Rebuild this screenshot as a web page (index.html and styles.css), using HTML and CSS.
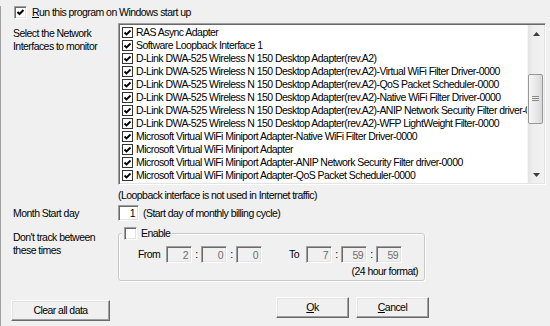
FILE: index.html
```html
<!DOCTYPE html>
<html lang="en">
<head>
    <meta charset="UTF-8">
    <title>Settings</title>
    <link rel="stylesheet" href="styles.css">
</head>
<body>
    <div class="dialog">
        <div class="run-row">
            <span class="chk3d">
                <svg width="9" height="9" viewBox="0 0 9 9"><polyline points="1.5,4 3.5,6 7.5,2" fill="none" stroke="#000" stroke-width="2"/></svg>
            </span>
            <span><u>R</u>un this program on Windows start up</span>
        </div>

        <div class="row">
            <div class="side-label">Select the Network<br>Interfaces to monitor</div>
            <div class="listbox">
                <ul class="items">
                    <li><span class="chk"></span>RAS Async Adapter</li>
                    <li><span class="chk"></span>Software Loopback Interface 1</li>
                    <li><span class="chk"></span>D-Link DWA-525 Wireless N 150 Desktop Adapter(rev.A2)</li>
                    <li><span class="chk"></span>D-Link DWA-525 Wireless N 150 Desktop Adapter(rev.A2)-Virtual WiFi Filter Driver-0000</li>
                    <li><span class="chk"></span>D-Link DWA-525 Wireless N 150 Desktop Adapter(rev.A2)-QoS Packet Scheduler-0000</li>
                    <li><span class="chk"></span>D-Link DWA-525 Wireless N 150 Desktop Adapter(rev.A2)-Native WiFi Filter Driver-0000</li>
                    <li><span class="chk"></span>D-Link DWA-525 Wireless N 150 Desktop Adapter(rev.A2)-ANIP Network Security Filter driver-0000</li>
                    <li><span class="chk"></span>D-Link DWA-525 Wireless N 150 Desktop Adapter(rev.A2)-WFP LightWeight Filter-0000</li>
                    <li><span class="chk"></span>Microsoft Virtual WiFi Miniport Adapter-Native WiFi Filter Driver-0000</li>
                    <li><span class="chk"></span>Microsoft Virtual WiFi Miniport Adapter</li>
                    <li><span class="chk"></span>Microsoft Virtual WiFi Miniport Adapter-ANIP Network Security Filter driver-0000</li>
                    <li><span class="chk"></span>Microsoft Virtual WiFi Miniport Adapter-QoS Packet Scheduler-0000</li>
                </ul>
                <div class="vscroll">
                    <div class="arrow">
                        <svg width="7" height="4" viewBox="0 0 7 4"><polygon points="0,4 3.5,0 7,4" fill="#3c3c3c"/></svg>
                    </div>
                    <div class="track">
                        <div class="thumb">
                            <svg width="7" height="6" viewBox="0 0 7 6"><path d="M0 0.5h7M0 2.5h7M0 4.5h7" stroke="#8a8a8a" stroke-width="1"/></svg>
                        </div>
                    </div>
                    <div class="arrow">
                        <svg width="7" height="4" viewBox="0 0 7 4"><polygon points="0,0 7,0 3.5,4" fill="#3c3c3c"/></svg>
                    </div>
                </div>
            </div>
        </div>

        <div class="note">(Loopback interface is not used in Internet traffic)</div>

        <div class="row month-row">
            <div class="side-label">Month Start day</div>
            <div class="edit day">1</div>
            <span class="hint">(Start day of monthly billing cycle)</span>
        </div>

        <div class="row track-row">
            <div class="side-label">Don't track between<br>these times</div>
            <div class="group">
                <div class="legend">
                    <span class="chk3d"></span>
                    <span>Enable</span>
                </div>
                <div class="time-row">
                    <span class="t-lbl from">From</span>
                    <span class="edit off">2</span><span class="colon">:</span>
                    <span class="edit off">0</span><span class="colon">:</span>
                    <span class="edit off">0</span>
                    <span class="t-lbl to">To</span>
                    <span class="edit off">7</span><span class="colon">:</span>
                    <span class="edit off">59</span><span class="colon">:</span>
                    <span class="edit off">59</span>
                </div>
                <div class="fmt">(24 hour format)</div>
            </div>
        </div>

        <div class="buttons">
            <button class="btn clear">Clear all data</button>
            <div class="btn-pair">
                <button class="btn"><u>O</u>k</button>
                <button class="btn"><u>C</u>ancel</button>
            </div>
        </div>
    </div>
</body>
</html>
```

FILE: styles.css
```css
body, html {
    margin: 0;
    padding: 0;
    background: #f0f0f0;
    overflow: hidden;
}
.dialog {
    width: 549px;
    height: 326px;
    border-left: 1px solid #a0a0a0;
    font-family: "Liberation Sans", Arial, sans-serif;
    font-size: 10.5px;
    letter-spacing: -0.55px;
    line-height: 13px;
    color: #000;
}
u {
    text-decoration: underline;
    text-underline-offset: 1px;
}

/* classic sunken checkbox */
.chk3d {
    width: 13px;
    height: 13px;
    box-sizing: border-box;
    display: inline-flex;
    align-items: center;
    justify-content: center;
    background: #fff;
    border: 1px solid;
    border-color: #a0a0a0 #fff #fff #a0a0a0;
    box-shadow: inset 1px 1px 0 #696969, inset -1px -1px 0 #e3e3e3;
    flex-shrink: 0;
}

.run-row {
    display: flex;
    align-items: center;
    margin: 6px 0 0 13px;
    height: 13px;
}
.run-row .chk3d {
    margin-right: 5px;
}

.row {
    display: flex;
    align-items: flex-start;
}
.side-label {
    width: 105px;
    margin-left: 12px;
    flex-shrink: 0;
}

/* interfaces list */
.row:nth-child(2) {
    margin-top: 4px;
}
.row:nth-child(2) .side-label {
    margin-top: 4px;
}
.listbox {
    width: 428px;
    height: 162px;
    box-sizing: border-box;
    display: flex;
    background: #fff;
    border: 1px solid;
    border-color: #a0a0a0 #fff #fff #a0a0a0;
    box-shadow: inset 1px 1px 0 #696969, inset -1px -1px 0 #e3e3e3;
    padding: 1px;
}
.items {
    list-style: none;
    margin: 0;
    padding: 1px 0 0 0;
    flex: 1;
    overflow: hidden;
    white-space: nowrap;
}
.items li {
    height: 13px;
    display: flex;
    align-items: center;
}
.chk {
    width: 11px;
    height: 11px;
    box-sizing: border-box;
    margin: 0 3px 0 2px;
    border: 1px solid #333;
    background: #fff url("data:image/svg+xml,%3Csvg xmlns='http://www.w3.org/2000/svg' width='9' height='9' viewBox='0 0 9 9'%3E%3Cpolyline points='1.5,4.5 3.5,6.5 7.5,2.5' fill='none' stroke='%23000' stroke-width='1.8'/%3E%3C/svg%3E") center / 9px 9px no-repeat;
    flex-shrink: 0;
}

.vscroll {
    width: 17px;
    display: flex;
    flex-direction: column;
    background: linear-gradient(to right, #e3e3e3, #eeeeee 30%, #f2f2f2);
    border-left: 1px solid #f7f7f7;
    box-sizing: border-box;
}
.arrow {
    height: 17px;
    display: flex;
    align-items: center;
    justify-content: center;
}
.track {
    flex: 1;
}
.thumb {
    margin: 32px 1px 0 0;
    height: 50px;
    box-sizing: border-box;
    border: 1px solid #979797;
    border-radius: 2px;
    background: linear-gradient(to right, #f6f6f6, #e9e9e9 50%, #d9d9d9);
    display: flex;
    align-items: center;
    justify-content: center;
}

.note {
    margin: 4px 0 0 117px;
}

/* month start day */
.month-row {
    margin-top: 3px;
    align-items: center;
}
.edit {
    box-sizing: border-box;
    display: inline-block;
    height: 16px;
    padding: 1px 3px 0 0;
    text-align: right;
    background: #fff;
    border: 1px solid;
    border-color: #a0a0a0 #fff #fff #a0a0a0;
    box-shadow: inset 1px 1px 0 #696969, inset -1px -1px 0 #e3e3e3;
}
.edit.day {
    width: 21px;
}
.hint {
    margin-left: 4px;
}

/* don't track */
.track-row {
    margin-top: 10px;
}
.group {
    position: relative;
    margin-top: 2px;
    width: 307px;
    height: 48px;
    box-sizing: border-box;
    border: 1px solid #c9c9c9;
    border-radius: 3px;
    box-shadow: inset 1px 1px 0 #fff, 1px 1px 0 #fff;
    padding: 0 6px 0 19px;
}
.legend {
    position: absolute;
    top: -7px;
    left: 3px;
    display: flex;
    align-items: center;
    background: #f0f0f0;
    padding: 0 2px;
    height: 13px;
}
.legend .chk3d {
    margin-right: 4px;
}
.time-row {
    display: flex;
    align-items: center;
    margin-top: 12px;
}
.t-lbl.from {
    width: 28px;
}
.t-lbl.to {
    width: 17px;
    margin-left: 27px;
}
.edit.off {
    width: 26px;
    height: 17px;
    padding-top: 2px;
    background: #f0f0f0;
    color: #6d6d6d;
}
.colon {
    width: 9px;
    text-align: center;
}
.fmt {
    text-align: right;
    margin-top: 2px;
}

/* buttons */
.buttons {
    display: flex;
    align-items: flex-start;
}
.btn {
    height: 21px;
    box-sizing: border-box;
    font: inherit;
    letter-spacing: inherit;
    color: #000;
    background: #f0f0f0;
    border: 1px solid;
    border-color: #fff #696969 #696969 #fff;
    box-shadow: inset -1px -1px 0 #a0a0a0, inset 1px 1px 0 #e3e3e3;
    padding: 0;
}
.btn.clear {
    width: 99px;
    margin: 19px 0 0 10px;
}
.btn-pair {
    display: flex;
    gap: 7px;
    margin: 16px 0 0 166px;
}
.btn-pair .btn {
    width: 73px;
}
```
